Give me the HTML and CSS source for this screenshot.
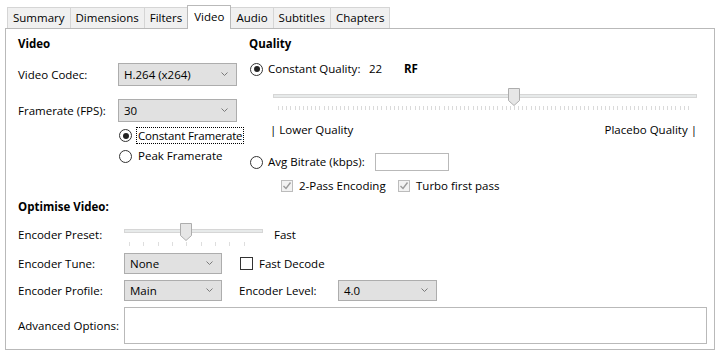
FILE: index.html
```html
<!DOCTYPE html>
<html>
<head>
<meta charset="utf-8">
<link rel="stylesheet" href="styles.css">
</head>
<body>
<div class="tabs">
  <div class="tab">Summary</div>
  <div class="tab">Dimensions</div>
  <div class="tab">Filters</div>
  <div class="tab active">Video</div>
  <div class="tab">Audio</div>
  <div class="tab">Subtitles</div>
  <div class="tab">Chapters</div>
</div>
<div class="panel">
  <div class="top">
    <div class="col-left">
      <div class="heading">Video</div>
      <div class="row row-codec">
        <span class="lbl lbl-video">Video Codec:</span>
        <div class="combo combo-wide">H.264 (x264)<svg class="chev" width="7" height="5" viewBox="0 0 7 5"><path d="M0.5 0.5 L3.5 3.5 L6.5 0.5" fill="none" stroke="#7a7a7a" stroke-width="1"/></svg></div>
      </div>
      <div class="row row-fps">
        <span class="lbl lbl-video">Framerate (FPS):</span>
        <div class="combo combo-wide">30<svg class="chev" width="7" height="5" viewBox="0 0 7 5"><path d="M0.5 0.5 L3.5 3.5 L6.5 0.5" fill="none" stroke="#7a7a7a" stroke-width="1"/></svg></div>
      </div>
      <div class="radio-row rr-cfr">
        <span class="radio checked"></span><span class="focus">Constant Framerate</span>
      </div>
      <div class="radio-row rr-pfr">
        <span class="radio"></span><span class="rtext">Peak Framerate</span>
      </div>
    </div>
    <div class="col-right">
      <div class="heading">Quality</div>
      <div class="cq-row">
        <span class="radio checked"></span>
        <span class="cq-label">Constant Quality:</span>
        <span class="cq-val">22</span>
        <span class="bold">RF</span>
      </div>
      <div class="slider cq-slider">
        <div class="track"></div>
        <svg class="thumb" style="left:235px" width="12" height="18" viewBox="0 0 12 18"><path d="M0.5 0.5 H11.5 V12.5 L6 17.5 L0.5 12.5 Z" fill="#e6e6e6" stroke="#adadad"/></svg>
        <div class="ticks ticks-dense"></div>
      </div>
      <div class="q-labels"><span>| Lower Quality</span><span>Placebo Quality |</span></div>
      <div class="avg-row">
        <span class="radio"></span>
        <span class="avg-label">Avg Bitrate (kbps):</span>
        <div class="textbox"></div>
      </div>
      <div class="check-row">
        <div class="check-item ci-first"><span class="cbox disabled"><svg width="10" height="10" viewBox="0 0 10 10"><path d="M1.5 5 L4 7.5 L8.5 1.5" fill="none" stroke="#9a9a9a" stroke-width="1.4"/></svg></span>2-Pass Encoding</div>
        <div class="check-item"><span class="cbox disabled"><svg width="10" height="10" viewBox="0 0 10 10"><path d="M1.5 5 L4 7.5 L8.5 1.5" fill="none" stroke="#9a9a9a" stroke-width="1.4"/></svg></span>Turbo first pass</div>
      </div>
    </div>
  </div>
  <div class="bottom">
    <div class="heading">Optimise Video:</div>
    <div class="row row-preset">
      <span class="lbl lbl-opt">Encoder Preset:</span>
      <div class="slider preset-slider">
        <div class="track"></div>
        <svg class="thumb" style="left:56px" width="12" height="18" viewBox="0 0 12 18"><path d="M0.5 0.5 H11.5 V12.5 L6 17.5 L0.5 12.5 Z" fill="#e6e6e6" stroke="#adadad"/></svg>
        <div class="ticks ticks-sparse"></div>
      </div>
      <span class="fast">Fast</span>
    </div>
    <div class="row row-tune">
      <span class="lbl lbl-opt">Encoder Tune:</span>
      <div class="combo combo-small">None<svg class="chev" width="7" height="5" viewBox="0 0 7 5"><path d="M0.5 0.5 L3.5 3.5 L6.5 0.5" fill="none" stroke="#7a7a7a" stroke-width="1"/></svg></div>
      <div class="check-item fd"><span class="cbox"></span>Fast Decode</div>
    </div>
    <div class="row row-profile">
      <span class="lbl lbl-opt">Encoder Profile:</span>
      <div class="combo combo-small">Main<svg class="chev" width="7" height="5" viewBox="0 0 7 5"><path d="M0.5 0.5 L3.5 3.5 L6.5 0.5" fill="none" stroke="#7a7a7a" stroke-width="1"/></svg></div>
      <span class="lbl lbl-level">Encoder Level:</span>
      <div class="combo combo-level">4.0<svg class="chev" width="7" height="5" viewBox="0 0 7 5"><path d="M0.5 0.5 L3.5 3.5 L6.5 0.5" fill="none" stroke="#7a7a7a" stroke-width="1"/></svg></div>
    </div>
    <div class="row row-adv">
      <span class="lbl lbl-opt">Advanced Options:</span>
      <div class="textarea"></div>
    </div>
  </div>
</div>
</body>
</html>
```
FILE: styles.css
```css
* { box-sizing: border-box; }
html, body { margin: 0; padding: 0; background: #fff; }
body {
  width: 720px;
  height: 354px;
  overflow: hidden;
  font-family: "Open Sans", "Noto Sans", sans-serif;
  font-size: 11.5px;
  color: #000;
  line-height: 16px;
}

/* tabs */
.tabs {
  display: flex;
  align-items: flex-end;
  padding: 5px 0 0 7px;
  height: 28px;
}
.tab {
  height: 21px;
  line-height: 19px;
  padding: 0 5px;
  border: 1px solid #d5d5d5;
  border-bottom: none;
  background: #f0f0f0;
  margin-left: -1px;
  white-space: nowrap;
}
.tab:first-child { margin-left: 0; }
.tab.active {
  height: 24px;
  line-height: 21px;
  background: #fff;
  border-color: #b9b9b9;
  margin-bottom: -1px;
  position: relative;
  z-index: 1;
  padding: 0 6px;
}

/* panel */
.panel {
  margin-left: 5px;
  width: 710px;
  height: 322px;
  border: 1px solid #b9b9b9;
  padding: 7px 7px 0 12px;
}
.top { display: flex; }
.col-left { width: 231px; display: flex; flex-direction: column; }
.col-right { flex: 1; display: flex; flex-direction: column; }
.heading { font-weight: bold; height: 16px; }
.bold { font-weight: bold; }

.row { display: flex; align-items: center; }
.lbl { flex: none; white-space: nowrap; }
.lbl-video { width: 100px; }
.lbl-opt { width: 106px; }
.lbl-level { width: 99px; margin-left: 17px; }

.row-codec { margin-top: 11px; height: 23px; }
.row-fps { margin-top: 13px; height: 23px; }

.combo {
  position: relative;
  height: 100%;
  border: 1px solid #adadad;
  background: #e1e1e1;
  padding-left: 5px;
  display: flex;
  align-items: center;
  white-space: nowrap;
}
.combo .chev { position: absolute; right: 8px; top: 50%; margin-top: -3px; }
.combo-wide { width: 119px; }
.combo-small { width: 98px; }
.combo-level { width: 99px; }

/* radios */
.radio {
  flex: none;
  width: 13px;
  height: 13px;
  border: 1px solid #333;
  border-radius: 50%;
  background: #fff;
  display: flex;
  align-items: center;
  justify-content: center;
}
.radio.checked::after {
  content: "";
  width: 6px;
  height: 6px;
  border-radius: 50%;
  background: #222;
}
.radio-row { display: flex; align-items: center; padding-left: 101px; white-space: nowrap; }
.rr-cfr { margin-top: 5px; height: 17px; }
.rr-pfr { margin-top: 4px; height: 16px; }
.focus {
  flex: none;
  margin-left: 4px;
  border: 1px dotted #000;
  padding: 0 1px;
  height: 17px;
  line-height: 15px;
  letter-spacing: -0.15px;
}
.rtext { margin-left: 6px; }

/* right column */
.cq-row { display: flex; align-items: center; margin-top: 9px; height: 16px; padding-left: 1px; white-space: nowrap; }
.cq-label { margin-left: 5px; width: 101px; }
.cq-val { width: 35px; }

.slider { position: relative; flex: none; }
.track {
  height: 4px;
  background: #e7eaea;
  border: 1px solid #d6d6d6;
}
.thumb { position: absolute; top: 0; }
.ticks { height: 4px; }
.ticks-dense {
  margin: 0 5px;
  background: repeating-linear-gradient(to right, #dadada 0, #dadada 1px, transparent 1px, transparent 4.14px);
}
.ticks-sparse {
  margin: 0 5px;
  background: repeating-linear-gradient(to right, #dedede 0, #dedede 1px, transparent 1px, transparent 14.33px);
}
.cq-slider { margin: 9px 0 0 24px; width: 424px; height: 26px; padding-top: 8px; }
.cq-slider .thumb { top: 2px; }
.cq-slider .ticks { margin-top: 8px; }

.q-labels {
  display: flex;
  justify-content: space-between;
  margin-top: 10px;
  height: 16px;
  padding: 0 10px 0 21px;
}
.avg-row { display: flex; align-items: center; margin-top: 15px; height: 18px; padding-left: 1px; white-space: nowrap; }
.avg-label { margin-left: 5px; width: 107px; }
.textbox { width: 74px; height: 18px; border: 1px solid #b9b9b9; background: #fff; }

.check-row { display: flex; align-items: center; margin-top: 8px; height: 14px; padding-left: 32px; }
.check-item { display: flex; align-items: center; white-space: nowrap; }
.ci-first { width: 117px; }
.cbox {
  flex: none;
  width: 13px;
  height: 13px;
  border: 1px solid #333;
  background: #fff;
  margin-right: 6px;
  display: flex;
  align-items: center;
  justify-content: center;
}
.cbox.disabled { width: 12px; height: 12px; border-color: #bcbcbc; background: #f2f2f2; margin-right: 6px; }

/* bottom */
.bottom { margin-top: 6px; display: flex; flex-direction: column; }
.row-preset { margin-top: 7px; height: 26px; align-items: flex-start; }
.row-preset .lbl, .row-preset .fast { line-height: 26px; }
.preset-slider { width: 139px; height: 26px; padding-top: 7px; }
.preset-slider .thumb { top: 1px; }
.preset-slider .ticks { margin-top: 9px; }
.fast { margin-left: 11px; }
.row-tune { margin-top: 5px; height: 21px; }
.fd { margin-left: 18px; }
.row-profile { margin-top: 6px; height: 21px; }
.row-adv { margin-top: 6px; height: 37px; }
.textarea { width: 583px; height: 37px; border: 1px solid #b9b9b9; background: #fff; }
```
